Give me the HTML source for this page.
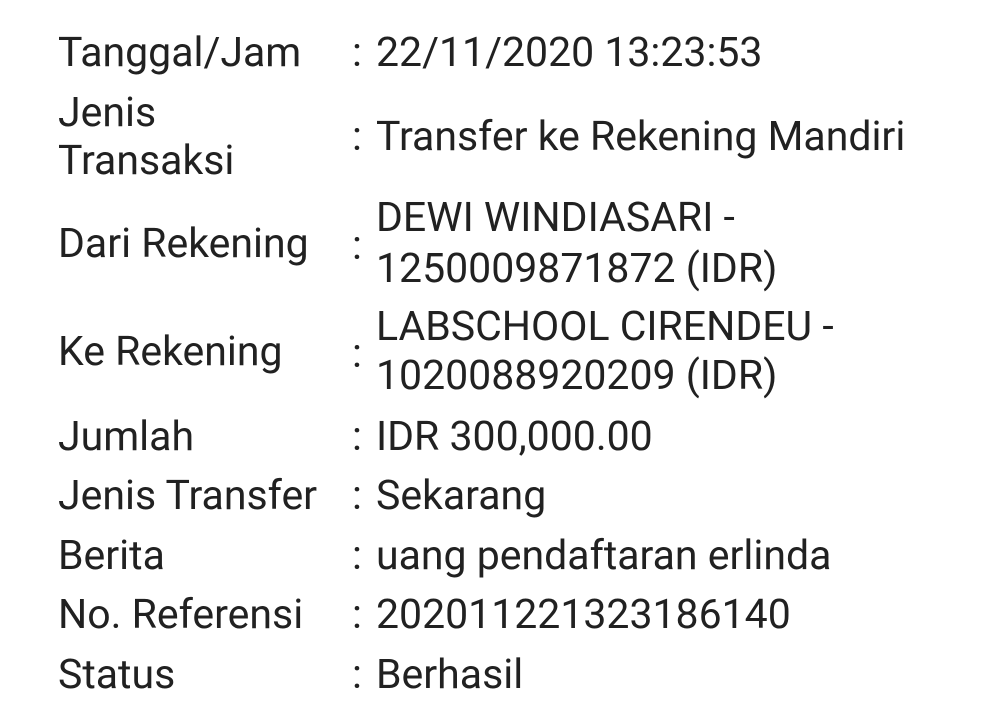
<!DOCTYPE html>
<html><head><meta charset="utf-8"><style>
html,body{margin:0;padding:0;background:#fff;width:995px;height:721px;overflow:hidden}
div{position:absolute;font-family:"Roboto","Liberation Sans",sans-serif;font-size:41px;line-height:40px;color:#212121;white-space:nowrap}
</style></head><body>
<div style="left:58px;top:33px">Tanggal/Jam</div>
<div style="left:352px;top:33px">:</div>
<div style="left:376px;top:33px">22/11/2020 13:23:53</div>

<div style="left:58px;top:93px">Jenis</div>
<div style="left:58px;top:141px">Transaksi</div>
<div style="left:352px;top:117px">:</div>
<div style="left:376px;top:117px">Transfer ke Rekening Mandiri</div>

<div style="left:58px;top:224px">Dari Rekening</div>
<div style="left:352px;top:226px">:</div>
<div style="left:376px;top:198px">DEWI WINDIASARI -</div>
<div style="left:376px;top:249px">1250009871872 (IDR)</div>

<div style="left:58px;top:332px">Ke Rekening</div>
<div style="left:352px;top:334px">:</div>
<div style="left:376px;top:307px">LABSCHOOL CIRENDEU -</div>
<div style="left:376px;top:356px">1020088920209 (IDR)</div>

<div style="left:58px;top:417px">Jumlah</div>
<div style="left:352px;top:417px">:</div>
<div style="left:376px;top:417px">IDR 300,000.00</div>

<div style="left:58px;top:476px">Jenis Transfer</div>
<div style="left:352px;top:476px">:</div>
<div style="left:376px;top:476px">Sekarang</div>

<div style="left:58px;top:536px">Berita</div>
<div style="left:352px;top:536px">:</div>
<div style="left:376px;top:536px">uang pendaftaran erlinda</div>

<div style="left:58px;top:595px">No. Referensi</div>
<div style="left:352px;top:595px">:</div>
<div style="left:376px;top:595px">202011221323186140</div>

<div style="left:58px;top:655px">Status</div>
<div style="left:352px;top:655px">:</div>
<div style="left:376px;top:655px">Berhasil</div>
</body></html>
